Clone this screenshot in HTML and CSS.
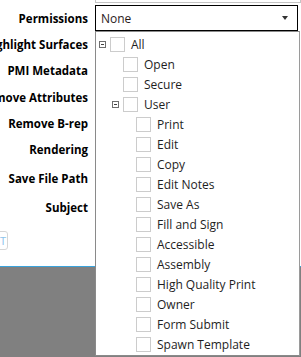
FILE: index.html
```html
<!DOCTYPE html>
<html lang="en">
<head>
    <meta charset="UTF-8">
    <title>Export Settings</title>
    <link rel="stylesheet" href="styles.css">
</head>
<body>

    <!-- Settings Form -->
    <div class="form">
        <div class="row stub-row">
            <div class="label"></div>
            <div class="stub"></div>
        </div>
        <div class="row h26">
            <div class="label">Permissions</div>
            <div class="combo">
                <span class="combo-value">None</span>
                <span class="combo-arrow"></span>
            </div>
        </div>
        <div class="row h26"><div class="label">Highlight Surfaces</div></div>
        <div class="row h27"><div class="label">PMI Metadata</div></div>
        <div class="row h26"><div class="label">Remove Attributes</div></div>
        <div class="row h26"><div class="label">Remove B-rep</div></div>
        <div class="row h27"><div class="label">Rendering</div></div>
        <div class="row h30"><div class="label">Save File Path</div></div>
        <div class="row h29"><div class="label">Subject</div></div>
        <div class="button-row">
            <div class="export-button">T</div>
        </div>
    </div>

    <!-- Permissions Dropdown -->
    <div class="popup">
        <div class="item lvl0"><span class="expander"></span><span class="check"></span>All</div>
        <div class="item lvl1"><span class="spacer"></span><span class="check"></span>Open</div>
        <div class="item lvl1"><span class="spacer"></span><span class="check"></span>Secure</div>
        <div class="item lvl1"><span class="expander"></span><span class="check"></span>User</div>
        <div class="item lvl2"><span class="spacer"></span><span class="check"></span>Print</div>
        <div class="item lvl2"><span class="spacer"></span><span class="check"></span>Edit</div>
        <div class="item lvl2"><span class="spacer"></span><span class="check"></span>Copy</div>
        <div class="item lvl2"><span class="spacer"></span><span class="check"></span>Edit Notes</div>
        <div class="item lvl2"><span class="spacer"></span><span class="check"></span>Save As</div>
        <div class="item lvl2"><span class="spacer"></span><span class="check"></span>Fill and Sign</div>
        <div class="item lvl2"><span class="spacer"></span><span class="check"></span>Accessible</div>
        <div class="item lvl2"><span class="spacer"></span><span class="check"></span>Assembly</div>
        <div class="item lvl2"><span class="spacer"></span><span class="check"></span>High Quality Print</div>
        <div class="item lvl2"><span class="spacer"></span><span class="check"></span>Owner</div>
        <div class="item lvl2"><span class="spacer"></span><span class="check"></span>Form Submit</div>
        <div class="item lvl2"><span class="spacer"></span><span class="check"></span>Spawn Template</div>
    </div>

</body>
</html>
```

FILE: styles.css
```css
body {
    margin: 0;
    width: 301px;
    height: 357px;
    overflow: hidden;
    position: relative;
    background: #808080;
    font-family: 'Open Sans', sans-serif;
}
.form {
    height: 266px;
    background: #ffffff;
    border-bottom: 1px solid #3aa3dc;
}
.row {
    display: flex;
    align-items: center;
}
.h26 { height: 26px; }
.h27 { height: 27px; }
.h29 { height: 29px; }
.h30 { height: 30px; }
.label {
    width: 88px;
    flex-shrink: 0;
    display: flex;
    justify-content: flex-end;
    white-space: nowrap;
    font-size: 11.5px;
    font-weight: 700;
    color: #000000;
    margin-right: 7px;
}
.stub-row {
    height: 5px;
    align-items: flex-start;
}
.stub {
    width: 204px;
    height: 2px;
    border: 1px solid #c4c4c4;
    border-top: none;
    box-sizing: content-box;
}
.combo {
    width: 203px;
    height: 26px;
    border: 1px solid #000000;
    display: flex;
    align-items: center;
    justify-content: space-between;
    padding: 0 9px 0 5px;
    box-sizing: border-box;
}
.combo-value {
    font-size: 12px;
    color: #2a1a1a;
}
.combo-arrow {
    width: 0;
    height: 0;
    border-left: 3px solid transparent;
    border-right: 3px solid transparent;
    border-top: 4px solid #333333;
}
.button-row {
    padding-top: 9px;
}
.export-button {
    width: 38px;
    height: 17px;
    margin-left: -33px;
    border: 1px solid #d6d6d6;
    border-radius: 3px;
    font-size: 11px;
    line-height: 17px;
    color: #8cc4ec;
    text-align: right;
    padding-right: 1px;
    box-sizing: content-box;
}
.popup {
    position: absolute;
    left: 95px;
    top: 31px;
    width: 203px;
    padding: 2px 0 0 0;
    height: 321px;
    background: #ffffff;
    border: 1px solid #8a8a8a;
    border-right-color: #9a9a9a;
}
.item {
    height: 20px;
    display: flex;
    align-items: center;
    font-size: 12px;
    color: #1e1e1e;
    white-space: nowrap;
}
.lvl0 { padding-left: 3px; }
.lvl1 { padding-left: 16px; }
.lvl2 { padding-left: 29px; }
.spacer {
    width: 7px;
    height: 7px;
    margin-right: 4px;
    flex-shrink: 0;
}
.expander {
    width: 7px;
    height: 7px;
    margin-right: 4px;
    flex-shrink: 0;
    border: 1px solid #6e6e6e;
    box-sizing: border-box;
    position: relative;
}
.expander::after {
    content: '';
    position: absolute;
    left: 1px;
    top: 2px;
    width: 3px;
    height: 1px;
    background: #404040;
}
.check {
    width: 15px;
    height: 15px;
    border: 1px solid #cccccc;
    box-sizing: border-box;
    margin-right: 6px;
    flex-shrink: 0;
}
```
